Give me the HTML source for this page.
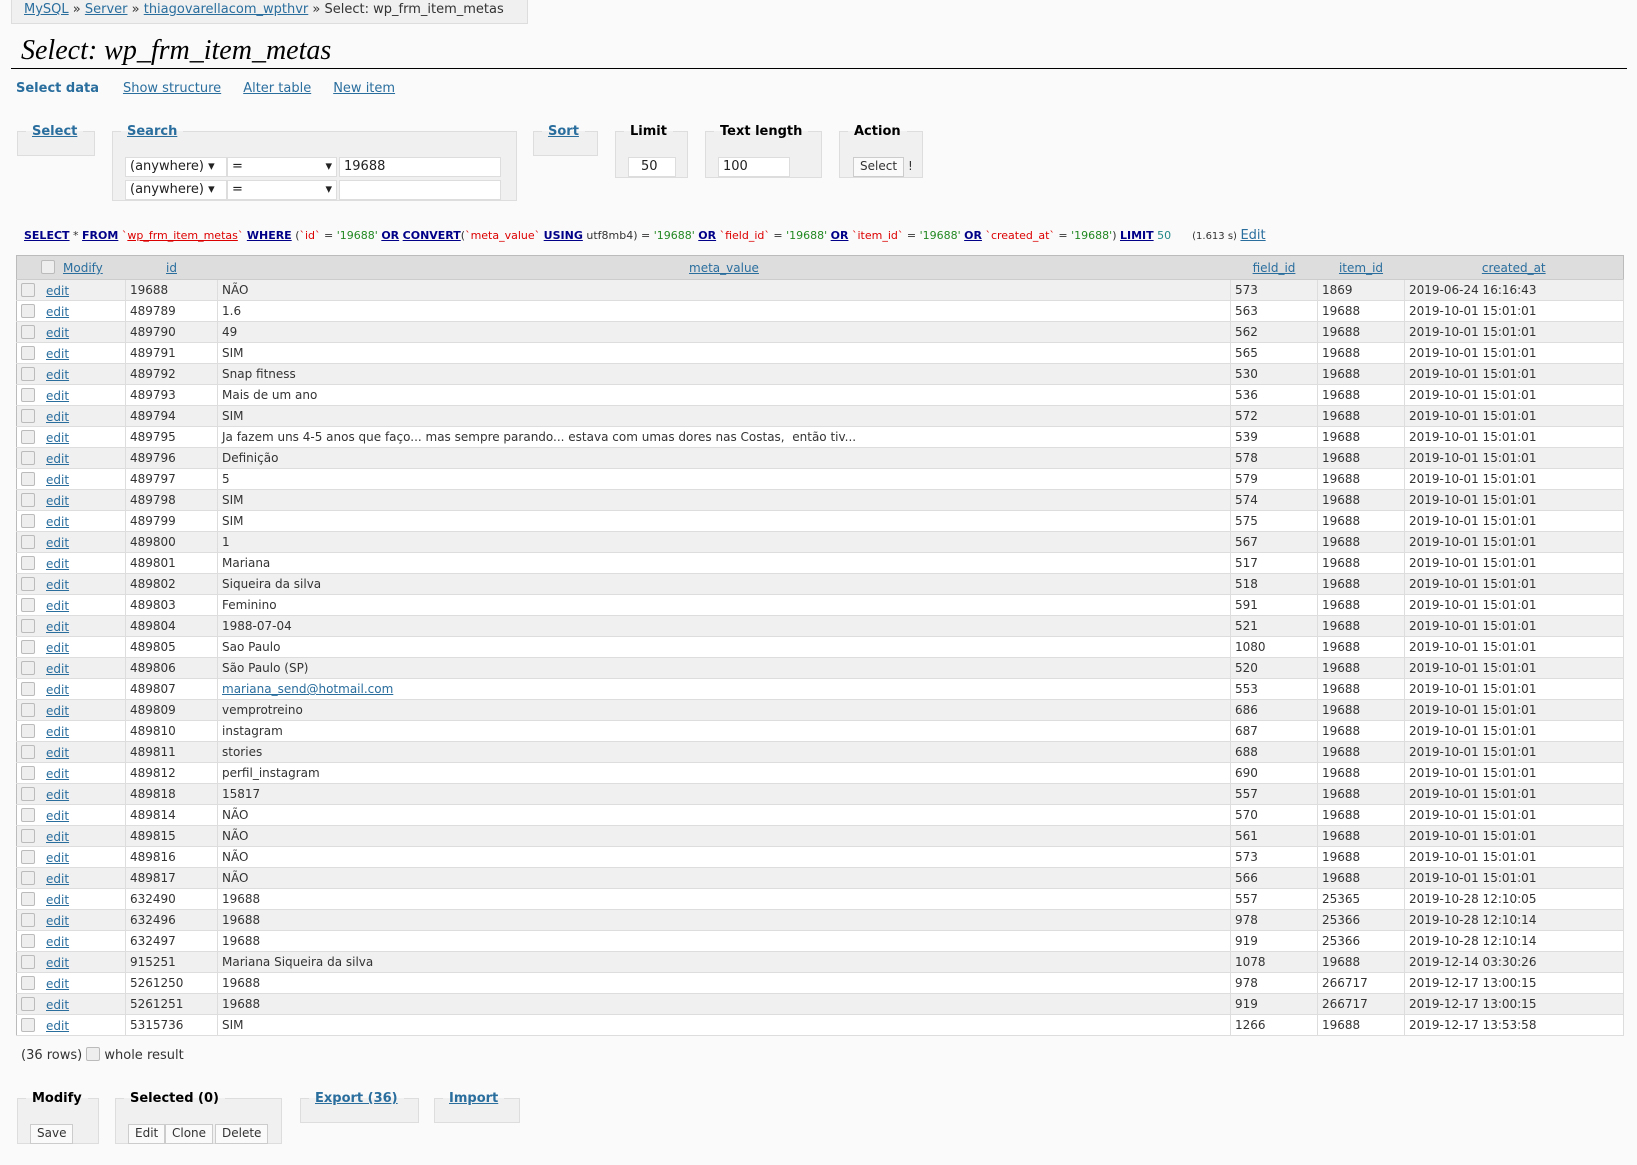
<!DOCTYPE html>
<html><head><meta charset="utf-8"><style>
*{box-sizing:border-box}
body{margin:0;background:#fafafa;font-family:"DejaVu Sans","Liberation Sans",sans-serif;font-size:12px;color:#333;width:1637px;height:1165px;position:relative;overflow:hidden}
a{color:#2a6e9e;text-decoration:underline}
.abs{position:absolute}
.bc{left:11px;top:-1px;width:517px;height:25px;background:#f0f0f0;border:1px solid #ddd;padding:2px 12px;font-size:13px;color:#333}
h2{position:absolute;left:11px;top:35px;width:1616px;margin:0;padding:0 0 3px 10px;font:italic 28px "Liberation Serif",serif;color:#000;border-bottom:1px solid #000;height:34px}
.menu{top:81px;left:16px;font-size:13px}
.menu a{margin-right:22px}
fieldset{position:absolute;margin:0;border:1px solid #ddd;background:#f0f0f0;padding:0}
legend{font-weight:bold;font-size:13px;padding:0 6px;margin-left:8px;color:#000}
legend a{color:#2a6e9e}
.inp{position:absolute;background:#fff;border:1px solid #ddd;height:20px;font-size:13px;padding:1px 4px;color:#222}
.btn{position:absolute;background:#fafafa;border:1px solid #ccc;font-size:12px;padding:1px 6px;height:20px;color:#333}
.sql{top:228px;left:24px;font-size:11px;color:#333;white-space:nowrap}
.k{color:#008;font-weight:bold;text-decoration:underline}
.i{color:#d00}
.s{color:#282}
table{position:absolute;left:16px;top:255px;width:1608px;border-collapse:collapse;font-size:12px;background:#fff;border:1px solid #bbb}
th{background:#ddd;height:24px;font-weight:normal;border-bottom:1px solid #ccc;padding:0 4px}
td{height:21px;padding:0 4px;border:1px solid #ddd;border-top:0;white-space:nowrap}
tr:nth-child(odd) td{background:#f0f0f0}
.cb{display:inline-block;width:14px;height:14px;border:1px solid #bbb;border-radius:2px;background:#eee;vertical-align:-2px;margin-right:11px}
td:first-child{border-left:0}
</style></head><body>
<div class="abs bc"><a>MySQL</a> » <a>Server</a> » <a>thiagovarellacom_wpthvr</a> » Select: wp_frm_item_metas</div>
<h2>Select: wp_frm_item_metas</h2>
<div class="abs menu"><b style="color:#2a6e9e;margin-right:24px">Select data</b><a>Show structure</a><a>Alter table</a><a>New item</a></div>

<fieldset style="left:17px;top:124px;width:78px;height:32px"><legend><a>Select</a></legend></fieldset>
<fieldset style="left:112px;top:124px;width:405px;height:77px"><legend><a>Search</a></legend>
<div class="inp" style="left:12px;top:18px;width:102px">(anywhere) ▾</div>
<div class="inp" style="left:114px;top:18px;width:110px">= <span style="float:right">▾</span></div>
<div class="inp" style="left:226px;top:18px;width:162px">19688</div>
<div class="inp" style="left:12px;top:41px;width:102px">(anywhere) ▾</div>
<div class="inp" style="left:114px;top:41px;width:110px">= <span style="float:right">▾</span></div>
<div class="inp" style="left:226px;top:41px;width:162px"></div>
</fieldset>
<fieldset style="left:533px;top:124px;width:65px;height:32px"><legend><a>Sort</a></legend></fieldset>
<fieldset style="left:615px;top:124px;width:73px;height:54px"><legend>Limit</legend>
<div class="inp" style="left:12px;top:18px;width:48px;padding-left:12px">50</div></fieldset>
<fieldset style="left:705px;top:124px;width:117px;height:54px"><legend>Text length</legend>
<div class="inp" style="left:12px;top:18px;width:72px">100</div></fieldset>
<fieldset style="left:839px;top:124px;width:84px;height:54px"><legend>Action</legend>
<div class="btn" style="left:13px;top:18px">Select</div><span class="abs" style="left:68px;top:20px">!</span></fieldset>

<div class="abs sql"><span class="k">SELECT</span> * <span class="k">FROM</span> <span class="i">`<u>wp_frm_item_metas</u>`</span> <span class="k">WHERE</span> (<span class="i">`id`</span> = <span class="s">'19688'</span> <span class="k">OR</span> <span class="k">CONVERT</span>(<span class="i">`meta_value`</span> <span class="k">USING</span> utf8mb4) = <span class="s">'19688'</span> <span class="k">OR</span> <span class="i">`field_id`</span> = <span class="s">'19688'</span> <span class="k">OR</span> <span class="i">`item_id`</span> = <span class="s">'19688'</span> <span class="k">OR</span> <span class="i">`created_at`</span> = <span class="s">'19688'</span>) <span class="k">LIMIT</span> <span style="color:#288">50</span> &nbsp; &nbsp; &nbsp;<span style="font-size:10px">(1.613 s)</span> <a style="font-size:13px">Edit</a></div>

<table>
<colgroup><col style="width:109px"><col style="width:92px"><col style="width:1013px"><col style="width:87px"><col style="width:87px"><col></colgroup>
<thead><tr><th style="text-align:left;padding-left:24px"><span class="cb" style="margin-right:8px"></span><a>Modify</a></th><th><a>id</a></th><th><a>meta_value</a></th><th><a>field_id</a></th><th><a>item_id</a></th><th><a>created_at</a></th></tr></thead>
<tbody>
<tr><td><span class="cb"></span><a>edit</a></td><td>19688</td><td>NÃO</td><td>573</td><td>1869</td><td>2019-06-24 16:16:43</td></tr>
<tr><td><span class="cb"></span><a>edit</a></td><td>489789</td><td>1.6</td><td>563</td><td>19688</td><td>2019-10-01 15:01:01</td></tr>
<tr><td><span class="cb"></span><a>edit</a></td><td>489790</td><td>49</td><td>562</td><td>19688</td><td>2019-10-01 15:01:01</td></tr>
<tr><td><span class="cb"></span><a>edit</a></td><td>489791</td><td>SIM</td><td>565</td><td>19688</td><td>2019-10-01 15:01:01</td></tr>
<tr><td><span class="cb"></span><a>edit</a></td><td>489792</td><td>Snap fitness</td><td>530</td><td>19688</td><td>2019-10-01 15:01:01</td></tr>
<tr><td><span class="cb"></span><a>edit</a></td><td>489793</td><td>Mais de um ano</td><td>536</td><td>19688</td><td>2019-10-01 15:01:01</td></tr>
<tr><td><span class="cb"></span><a>edit</a></td><td>489794</td><td>SIM</td><td>572</td><td>19688</td><td>2019-10-01 15:01:01</td></tr>
<tr><td><span class="cb"></span><a>edit</a></td><td>489795</td><td>Ja fazem uns 4-5 anos que faço... mas sempre parando... estava com umas dores nas Costas,&nbsp; então tiv...</td><td>539</td><td>19688</td><td>2019-10-01 15:01:01</td></tr>
<tr><td><span class="cb"></span><a>edit</a></td><td>489796</td><td>Definição</td><td>578</td><td>19688</td><td>2019-10-01 15:01:01</td></tr>
<tr><td><span class="cb"></span><a>edit</a></td><td>489797</td><td>5</td><td>579</td><td>19688</td><td>2019-10-01 15:01:01</td></tr>
<tr><td><span class="cb"></span><a>edit</a></td><td>489798</td><td>SIM</td><td>574</td><td>19688</td><td>2019-10-01 15:01:01</td></tr>
<tr><td><span class="cb"></span><a>edit</a></td><td>489799</td><td>SIM</td><td>575</td><td>19688</td><td>2019-10-01 15:01:01</td></tr>
<tr><td><span class="cb"></span><a>edit</a></td><td>489800</td><td>1</td><td>567</td><td>19688</td><td>2019-10-01 15:01:01</td></tr>
<tr><td><span class="cb"></span><a>edit</a></td><td>489801</td><td>Mariana</td><td>517</td><td>19688</td><td>2019-10-01 15:01:01</td></tr>
<tr><td><span class="cb"></span><a>edit</a></td><td>489802</td><td>Siqueira da silva</td><td>518</td><td>19688</td><td>2019-10-01 15:01:01</td></tr>
<tr><td><span class="cb"></span><a>edit</a></td><td>489803</td><td>Feminino</td><td>591</td><td>19688</td><td>2019-10-01 15:01:01</td></tr>
<tr><td><span class="cb"></span><a>edit</a></td><td>489804</td><td>1988-07-04</td><td>521</td><td>19688</td><td>2019-10-01 15:01:01</td></tr>
<tr><td><span class="cb"></span><a>edit</a></td><td>489805</td><td>Sao Paulo</td><td>1080</td><td>19688</td><td>2019-10-01 15:01:01</td></tr>
<tr><td><span class="cb"></span><a>edit</a></td><td>489806</td><td>São Paulo (SP)</td><td>520</td><td>19688</td><td>2019-10-01 15:01:01</td></tr>
<tr><td><span class="cb"></span><a>edit</a></td><td>489807</td><td><a>mariana_send@hotmail.com</a></td><td>553</td><td>19688</td><td>2019-10-01 15:01:01</td></tr>
<tr><td><span class="cb"></span><a>edit</a></td><td>489809</td><td>vemprotreino</td><td>686</td><td>19688</td><td>2019-10-01 15:01:01</td></tr>
<tr><td><span class="cb"></span><a>edit</a></td><td>489810</td><td>instagram</td><td>687</td><td>19688</td><td>2019-10-01 15:01:01</td></tr>
<tr><td><span class="cb"></span><a>edit</a></td><td>489811</td><td>stories</td><td>688</td><td>19688</td><td>2019-10-01 15:01:01</td></tr>
<tr><td><span class="cb"></span><a>edit</a></td><td>489812</td><td>perfil_instagram</td><td>690</td><td>19688</td><td>2019-10-01 15:01:01</td></tr>
<tr><td><span class="cb"></span><a>edit</a></td><td>489818</td><td>15817</td><td>557</td><td>19688</td><td>2019-10-01 15:01:01</td></tr>
<tr><td><span class="cb"></span><a>edit</a></td><td>489814</td><td>NÃO</td><td>570</td><td>19688</td><td>2019-10-01 15:01:01</td></tr>
<tr><td><span class="cb"></span><a>edit</a></td><td>489815</td><td>NÃO</td><td>561</td><td>19688</td><td>2019-10-01 15:01:01</td></tr>
<tr><td><span class="cb"></span><a>edit</a></td><td>489816</td><td>NÃO</td><td>573</td><td>19688</td><td>2019-10-01 15:01:01</td></tr>
<tr><td><span class="cb"></span><a>edit</a></td><td>489817</td><td>NÃO</td><td>566</td><td>19688</td><td>2019-10-01 15:01:01</td></tr>
<tr><td><span class="cb"></span><a>edit</a></td><td>632490</td><td>19688</td><td>557</td><td>25365</td><td>2019-10-28 12:10:05</td></tr>
<tr><td><span class="cb"></span><a>edit</a></td><td>632496</td><td>19688</td><td>978</td><td>25366</td><td>2019-10-28 12:10:14</td></tr>
<tr><td><span class="cb"></span><a>edit</a></td><td>632497</td><td>19688</td><td>919</td><td>25366</td><td>2019-10-28 12:10:14</td></tr>
<tr><td><span class="cb"></span><a>edit</a></td><td>915251</td><td>Mariana Siqueira da silva</td><td>1078</td><td>19688</td><td>2019-12-14 03:30:26</td></tr>
<tr><td><span class="cb"></span><a>edit</a></td><td>5261250</td><td>19688</td><td>978</td><td>266717</td><td>2019-12-17 13:00:15</td></tr>
<tr><td><span class="cb"></span><a>edit</a></td><td>5261251</td><td>19688</td><td>919</td><td>266717</td><td>2019-12-17 13:00:15</td></tr>
<tr><td><span class="cb"></span><a>edit</a></td><td>5315736</td><td>SIM</td><td>1266</td><td>19688</td><td>2019-12-17 13:53:58</td></tr>
</tbody></table>

<div class="abs" style="left:21px;top:1047px;font-size:13px">(36 rows) <span class="cb" style="margin-right:4px"></span>whole result</div>

<fieldset style="left:17px;top:1091px;width:82px;height:53px"><legend>Modify</legend>
<div class="btn" style="left:12px;top:18px">Save</div></fieldset>
<fieldset style="left:115px;top:1091px;width:167px;height:53px"><legend>Selected (0)</legend>
<div class="btn" style="left:12px;top:18px">Edit</div><div class="btn" style="left:49px;top:18px">Clone</div><div class="btn" style="left:99px;top:18px">Delete</div></fieldset>
<fieldset style="left:300px;top:1091px;width:119px;height:32px"><legend><a>Export (36)</a></legend></fieldset>
<fieldset style="left:434px;top:1091px;width:86px;height:32px"><legend><a>Import</a></legend></fieldset>
</body></html>
